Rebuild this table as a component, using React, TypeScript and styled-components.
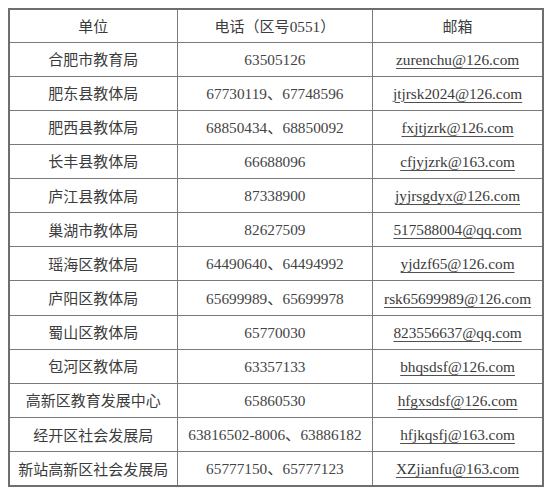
import React from "react";
import styled, { createGlobalStyle } from "styled-components";

const Global = createGlobalStyle`
  html, body { margin: 0; padding: 0; background: #ffffff; }
  body { font-family: "Noto Sans CJK SC", "Noto Sans", sans-serif; }
`;

const Page = styled.div`
  padding: 8px 8px 0 8px;
  width: 552px;
  box-sizing: border-box;
`;

const Table = styled.table`
  width: 536px;
  border-collapse: collapse;
  table-layout: fixed;
  border: 2px solid #6e6e6e;
  color: #3a3a3a;
`;

const Col = styled.col<{ $w: string }>`
  width: ${(p) => p.$w};
`;

const Row = styled.tr<{ $head?: boolean }>`
  height: ${(p) => (p.$head ? "33px" : "34.15px")};
`;

const Cell = styled.td<{ $kind: "cjk" | "num" | "mail" }>`
  border: 1px solid #7a7a7a;
  padding: 0;
  text-align: center;
  vertical-align: middle;
  white-space: nowrap;
  line-height: 18px;
  font-family: ${(p) =>
    p.$kind === "cjk"
      ? `"Noto Sans CJK SC", "Noto Sans", sans-serif`
      : `"Liberation Serif", "Noto Sans CJK SC", serif`};
  font-size: ${(p) => (p.$kind === "cjk" ? "15px" : "15.3px")};
  color: ${(p) => (p.$kind === "cjk" ? "#3c3c3c" : "#444444")};
  padding-top: ${(p) => (p.$kind === "cjk" ? "0" : "1px")};
`;

const HeadCell = styled.th`
  border: 1px solid #7a7a7a;
  padding: 0;
  font-weight: normal;
  font-size: 15px;
  color: #3c3c3c;
  text-align: center;
  vertical-align: middle;
  white-space: nowrap;
  font-family: "Noto Sans CJK SC", "Noto Sans", sans-serif;
`;

const Digits = styled.span`
  font-family: "Liberation Serif", serif;
  font-size: 15.3px;
`;

const Mail = styled.span`
  color: #3a3a3a;
  text-decoration: underline;
  text-decoration-color: #505050;
  text-underline-offset: 3px;
  text-decoration-thickness: 1px;
`;

type Entry = { unit: string; phone: string; mail: string };

const data: Entry[] = [
  { unit: "合肥市教育局", phone: "63505126", mail: "zurenchu@126.com" },
  { unit: "肥东县教体局", phone: "67730119、67748596", mail: "jtjrsk2024@126.com" },
  { unit: "肥西县教体局", phone: "68850434、68850092", mail: "fxjtjzrk@126.com" },
  { unit: "长丰县教体局", phone: "66688096", mail: "cfjyjzrk@163.com" },
  { unit: "庐江县教体局", phone: "87338900", mail: "jyjrsgdyx@126.com" },
  { unit: "巢湖市教体局", phone: "82627509", mail: "517588004@qq.com" },
  { unit: "瑶海区教体局", phone: "64490640、64494992", mail: "yjdzf65@126.com" },
  { unit: "庐阳区教体局", phone: "65699989、65699978", mail: "rsk65699989@126.com" },
  { unit: "蜀山区教体局", phone: "65770030", mail: "823556637@qq.com" },
  { unit: "包河区教体局", phone: "63357133", mail: "bhqsdsf@126.com" },
  { unit: "高新区教育发展中心", phone: "65860530", mail: "hfgxsdsf@126.com" },
  { unit: "经开区社会发展局", phone: "63816502-8006、63886182", mail: "hfjkqsfj@163.com" },
  { unit: "新站高新区社会发展局", phone: "65777150、65777123", mail: "XZjianfu@163.com" },
];

export default function App() {
  return (
    <>
      <Global />
      <Page>
        <Table>
          <colgroup>
            <Col $w="31.5%" />
            <Col $w="36.6%" />
            <Col $w="31.9%" />
          </colgroup>
          <thead>
            <Row $head>
              <HeadCell>单位</HeadCell>
              <HeadCell>
                电话（区号<Digits>0551</Digits>）
              </HeadCell>
              <HeadCell>邮箱</HeadCell>
            </Row>
          </thead>
          <tbody>
            {data.map((d) => (
              <Row key={d.unit}>
                <Cell $kind="cjk">{d.unit}</Cell>
                <Cell $kind="num">{d.phone}</Cell>
                <Cell $kind="mail">
                  <Mail>{d.mail}</Mail>
                </Cell>
              </Row>
            ))}
          </tbody>
        </Table>
      </Page>
    </>
  );
}
